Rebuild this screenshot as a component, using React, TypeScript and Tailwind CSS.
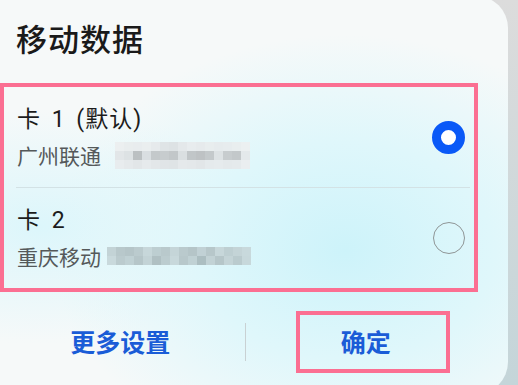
import React from 'react';

const mosaicOne = [
	['#eceff0', '#e9edee', '#e8ecee', '#eaeeef', '#e6eaec', '#dfe3e5', '#dde1e3', '#e4e8ea', '#e8ecee', '#e6eaec', '#e9edee', '#e7ebed', '#e8ecee', '#eaeeef', '#edf0f1'],
	['#e2e6e8', '#dde1e3', '#b9bec0', '#d9dde0', '#c3c7c9', '#c6cacc', '#c1c5c7', '#dadee0', '#c0c4c6', '#bcc0c2', '#c3c7c9', '#dde1e3', '#c6cacc', '#c2c6c8', '#e5e9eb'],
	['#e8ecee', '#e5e9eb', '#e2e6e8', '#e6eaec', '#e3e7e9', '#e0e4e6', '#dfe3e5', '#e5e9eb', '#e4e8ea', '#e2e6e8', '#e6eaec', '#e7ebed', '#e5e9eb', '#e6eaec', '#ebeef0'],
];

const mosaicTwo = [
	['#c2d2d5', '#b6c6c9', '#b3c3c6', '#b9c9cc', '#c6d6d9', '#bccccf', '#b7c7ca', '#c4d4d7', '#b8c8cb', '#b3c3c6', '#c0d0d3', '#b5c5c8', '#c6d6d9', '#bdcdd0', '#c3d3d6', '#c8d8db'],
	['#c8d8db', '#b9c9cc', '#bfcfd2', '#b4c4c7', '#c2d2d5', '#aebec1', '#bacacd', '#c7d7da', '#b6c6c9', '#bfcfd2', '#aabbbe', '#c1d1d4', '#b4c4c7', '#c3d3d6', '#b9c9cc', '#c7d7da'],
];

const Mosaic: React.FC<{ cells: string[][]; size: number }> = ({ cells, size }) => (
	<div className="flex flex-col blur-[0.6px] opacity-95">
		{cells.map((row, i) => (
			<div key={i} className="flex">
				{row.map((c, j) => (
					<span key={j} style={{ background: c, width: size, height: size }} />
				))}
			</div>
		))}
	</div>
);

const SimRow: React.FC<{
	name: string;
	carrier: string;
	selected: boolean;
	gap: string;
	mosaic: React.ReactNode;
}> = ({ name, carrier, selected, gap, mosaic }) => (
	<div className="flex h-[100px] items-center pl-[13px] pr-[9px]">
		<div className="flex flex-1 flex-col gap-[4px] self-start pt-[18px]">
			<div className="font-['Roboto','Noto_Sans_CJK_SC',sans-serif] text-[23px] leading-[30px] tracking-[1px] text-[#1c1c1c] [word-spacing:4px]">
				{name}
			</div>
			<div className={`flex items-center ${gap} text-[21px] leading-[32px] text-[#55595a]`}>
				<span>{carrier}</span>
				{mosaic}
			</div>
		</div>
		{selected ? (
			<div className="h-[33px] w-[33px] rounded-full border-[9px] border-[#0a59f7] bg-white" />
		) : (
			<div className="h-[32px] w-[32px] rounded-full border-[1.5px] border-[#8f9596]" />
		)}
	</div>
);

export default function App() {
	return (
		<div className="flex h-[385px] w-[518px] overflow-hidden bg-[linear-gradient(to_bottom,#dcdcdc,#c4d5d9)] font-['Noto_Sans_CJK_SC','Noto_Sans',sans-serif]">
			<div className="-mt-[4px] flex h-[398px] w-[508px] flex-col rounded-r-[32px] bg-[#f6f9f9] bg-[radial-gradient(ellipse_at_68%_64%,#cdf3fa_0%,#dff7fb_30%,rgba(246,249,249,0)_60%),radial-gradient(ellipse_at_8%_58%,#dcf6fb_0%,rgba(246,249,249,0)_36%)]">
				<div className="pl-[16px] pt-[22px] text-[31px] font-medium leading-[40px] tracking-[1px] text-[#1a1a1a]">
					移动数据
				</div>
				<div className="mt-[25px] w-[478px] border-4 border-[#fb6f92]">
					<SimRow
						name="卡 1 (默认)"
						carrier="广州联通"
						selected
						gap="gap-[14px]"
						mosaic={<Mosaic cells={mosaicOne} size={9} />}
					/>
					<div className="ml-[12px] mr-[4px] h-px bg-[#d3e2e5]" />
					<SimRow
						name="卡 2"
						carrier="重庆移动"
						selected={false}
						gap="gap-[6px]"
						mosaic={<Mosaic cells={mosaicTwo} size={9} />}
					/>
				</div>
				<div className="mt-[19px] flex h-[62px] w-[486px] items-center text-[25px] font-semibold text-[#1a5cd7]">
					<div className="flex flex-1 justify-center pr-[4px]">更多设置</div>
					<div className="h-[38px] w-px bg-[#c9d1d3]" />
					<div className="flex flex-1 justify-center">
						<div className="ml-[14px] flex h-[62px] w-[154px] items-center justify-center border-4 border-[#fb6f92] pr-[14px]">
							确定
						</div>
					</div>
				</div>
			</div>
		</div>
	);
}
